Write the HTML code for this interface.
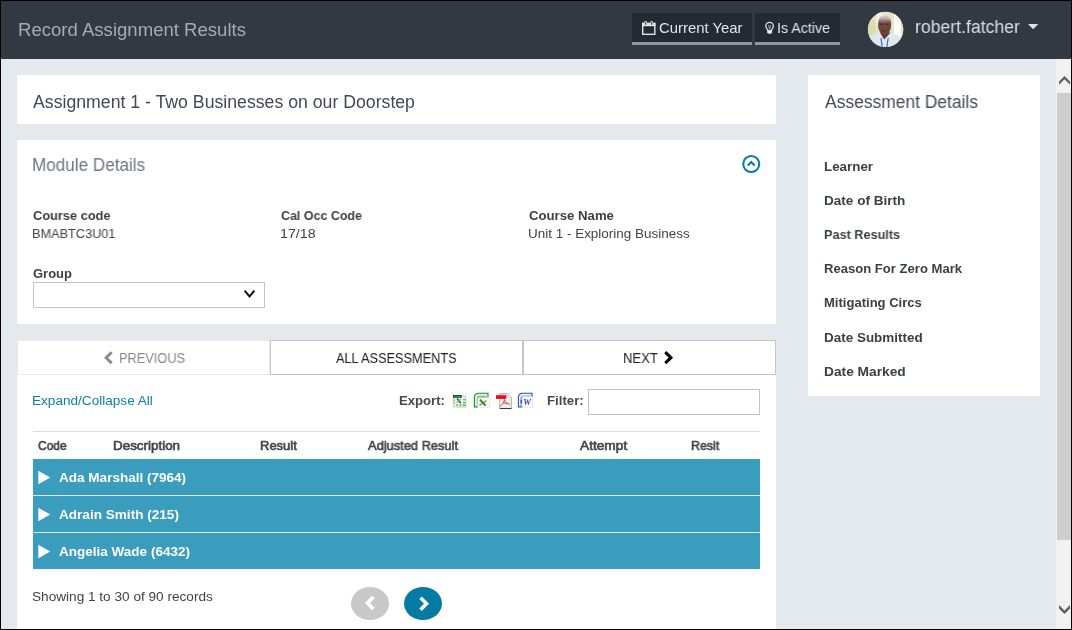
<!DOCTYPE html>
<html><head><meta charset="utf-8"><title>Record Assignment Results</title>
<style>
html,body{margin:0;padding:0;}
body{width:1072px;height:630px;overflow:hidden;background:#000;font-family:"Liberation Sans",sans-serif;position:relative;}
#app{position:absolute;left:1px;top:1px;width:1070px;height:628px;background:#e4e9ed;overflow:hidden;}
/* all children positioned in page coordinates via wrapper offset */
#w{position:absolute;left:-1px;top:-1px;width:1072px;height:630px;}
#w div,#w span,#w svg{position:absolute;}
.t{white-space:pre;transform-origin:0 0;line-height:1;-webkit-font-smoothing:antialiased;will-change:transform;}
.hdr{left:0;top:0;width:1072px;height:59px;background:#323942;}
.card{background:#fff;}
.btn{background:#242a33;border-bottom:3px solid #969696;box-sizing:border-box;}
.row{left:33px;width:727px;height:36px;background:#3b9dbd;}
</style></head><body>
<div id="app"><div id="w">
<div class="hdr"></div>
<!-- header buttons -->
<div class="btn" style="left:632px;top:13px;width:120px;height:32px"></div>
<div class="btn" style="left:755px;top:13px;width:85px;height:32px"></div>
<!-- cards -->
<div class="card" style="left:17px;top:75px;width:759px;height:49px"></div>
<div class="card" style="left:17px;top:140px;width:759px;height:184px"></div>
<div class="card" style="left:17px;top:340px;width:759px;height:290px"></div>
<div class="card" style="left:808px;top:75px;width:232px;height:321px"></div>
<!-- select -->
<div style="left:33px;top:282px;width:232px;height:26px;box-sizing:border-box;border:1px solid #c4c4c4;background:#fff"></div>
<!-- tabs -->
<div style="left:17px;top:340px;width:253px;height:35px;box-sizing:border-box;border:1px solid #ebebeb;background:#fff"></div>
<div style="left:270px;top:340px;width:253px;height:35px;box-sizing:border-box;border:1px solid #c6c6c6;background:#fff"></div>
<div style="left:523px;top:340px;width:253px;height:35px;box-sizing:border-box;border:1px solid #c6c6c6;background:#fff"></div>
<!-- filter input -->
<div style="left:588px;top:389px;width:172px;height:26px;box-sizing:border-box;border:1px solid #c4c4c4;background:#fff"></div>
<!-- table -->
<div style="left:33px;top:431px;width:727px;height:1px;background:#dedede"></div>
<div style="left:33px;top:459px;width:727px;height:110px;background:#e3e6e8"></div>
<div class="row" style="top:459px"></div>
<div class="row" style="top:496px"></div>
<div class="row" style="top:533px"></div>
<!-- pager -->
<div style="left:351px;top:587px;width:38px;height:33px;border-radius:50%;background:#c8c8c8"></div>
<div style="left:404px;top:587px;width:38px;height:33px;border-radius:50%;background:#047ba3"></div>
<!-- scrollbar -->
<div style="left:1056px;top:59px;width:16px;height:571px;background:#f1f1f1"></div>
<div style="left:1057px;top:93px;width:15px;height:447px;background:#cdcdcd"></div>

<!-- ICONS -->
<svg style="left:0;top:0" width="1072" height="630" viewBox="0 0 1072 630">
 <defs>
  <clipPath id="avc"><circle cx="885.6" cy="29.4" r="17.7"/></clipPath>
  <filter id="bl" x="-20%" y="-20%" width="140%" height="140%"><feGaussianBlur stdDeviation="0.7"/></filter>
 <filter id="bl2" x="-5%" y="-5%" width="110%" height="110%"><feGaussianBlur stdDeviation="0.3"/></filter>
 <linearGradient id="hg" x1="0" y1="15.6" x2="0" y2="35" gradientUnits="userSpaceOnUse"><stop offset="0" stop-color="#d6cdcf"/><stop offset="0.13" stop-color="#c4b6b6"/><stop offset="0.27" stop-color="#97756c"/><stop offset="0.4" stop-color="#74493f"/><stop offset="1" stop-color="#6a4238"/></linearGradient>
 </defs>
 <!-- calendar -->
 <g fill="#e3e4e6">
  <rect x="642" y="22.8" width="13.5" height="3.4"/>
  <rect x="644.4" y="21" width="2.6" height="4" rx="1"/>
  <rect x="650.4" y="21" width="2.6" height="4" rx="1"/>
 </g>
 <rect x="642.7" y="23.5" width="12.1" height="10.8" fill="none" stroke="#e3e4e6" stroke-width="1.4"/>
 <rect x="645.2" y="21.8" width="1" height="3" fill="#242a33"/>
 <rect x="651.2" y="21.8" width="1" height="3" fill="#242a33"/>
 <!-- lightbulb -->
 <path d="M767.7 30.3 C767.6 28.9 765.8 27.9 765.8 26.1 A3.8 3.8 0 0 1 773.4 26.1 C773.4 27.9 771.6 28.9 771.5 30.3" fill="none" stroke="#e3e4e6" stroke-width="1.3"/>
 <path d="M767.1 30 h5 v2.2 q-0.5 1.8 -2.5 1.8 q-2 0 -2.5 -1.8 z" fill="#e3e4e6"/>
 <path d="M768.6 25 l1 4.4 l1 -4.4" fill="none" stroke="#c5c7ca" stroke-width="0.7"/>
 <!-- avatar -->
 <g clip-path="url(#avc)">
  <rect x="867" y="11" width="38" height="38" fill="#e2e4c6"/>
  <g filter="url(#bl)">
   <rect x="893.8" y="11" width="7.2" height="29" fill="#fcfcfc"/>
   <rect x="876.5" y="11" width="5.5" height="14" fill="#f3f3ea"/>
   <ellipse cx="871.5" cy="28" rx="4.5" ry="9" fill="#d9ddb0"/>
   <rect x="901" y="24" width="5" height="14" fill="#dfe3bd"/>
   <path d="M865 50 L865 39 Q872 35 879.5 32.3 L891 32.3 Q898 35 906 40 L906 50 Z" fill="#e3e6f1"/>
   <path d="M879.8 32.6 L884.2 39.5 L890.6 32.6 Z" fill="#5a3a35"/>
   <path d="M878 24 Q878 15.6 884.6 15.6 Q891.2 15.6 891.2 24 Q891.2 30 888.4 33 Q886.4 35 884.6 35 Q882.6 35 880.8 33 Q878 30 878 24Z" fill="url(#hg)"/>
   <path d="M880.2 24.2 h3 M885.8 24.2 h3" stroke="#3e2622" stroke-width="1.1"/>
   <ellipse cx="884.6" cy="30.2" rx="2.6" ry="1.3" fill="#4e2c28"/>
   <ellipse cx="884.8" cy="30" rx="1.1" ry="0.5" fill="#a8746c"/>
  </g>
  <path d="M881 38 L882.3 47.8 M888.2 38 L886.7 47.8" stroke="#2b63cb" stroke-width="1.1" fill="none"/>
 </g>
 <!-- caret -->
 <path d="M1028 24 L1038.3 24 L1033.15 29.2 Z" fill="#e0e1e3"/>
 <!-- circle chevron -->
 <circle cx="751.25" cy="164" r="8" fill="none" stroke="#0a7ba5" stroke-width="2.1"/>
 <path d="M747.8 165.4 L751.25 162 L754.7 165.4" fill="none" stroke="#0a7ba5" stroke-width="2.1"/>
 <!-- select chevron -->
 <path d="M244.6 290.7 L249.5 296.4 L254.4 290.7" fill="none" stroke="#111" stroke-width="2"/>
 <!-- tab chevrons -->
 <path d="M111.7 352.3 L106.2 357.8 L111.7 363.3" fill="none" stroke="#8c8c8c" stroke-width="3"/>
 <path d="M665.3 352.2 L670.9 357.7 L665.3 363.2" fill="none" stroke="#000" stroke-width="3.1"/>
 <!-- row triangles -->
 <g fill="#fff">
  <path d="M38.3 470.8 L50.3 477.5 L38.3 484.2Z"/>
  <path d="M38.3 507.8 L50.3 514.5 L38.3 521.2Z"/>
  <path d="M38.3 544.8 L50.3 551.5 L38.3 558.2Z"/>
 </g>
 <!-- pager chevrons -->
 <path d="M373.5 596.9 L367.4 603 L373.5 609.1" fill="none" stroke="#fff" stroke-width="3.6"/>
 <path d="M420.5 597.8 L426.5 603.8 L420.5 609.8" fill="none" stroke="#fff" stroke-width="3.6"/>
 <!-- scrollbar arrows -->
 <path d="M1064.5 76 L1070 81.5 V84.8 L1064.5 79.3 L1059 84.8 V81.5 Z" fill="#5f5f5f"/>
 <path d="M1064.5 614 L1070 608.5 V605.1 L1064.5 610.6 L1059 605.1 V608.5 Z" fill="#5f5f5f"/>
 
 <g filter="url(#bl2)">
 <!-- csv icon -->
 <rect x="453.6" y="396.6" width="12" height="10.2" fill="#fdfffd" stroke="#a9d49a" stroke-width="0.9"/>
 <path d="M466.2 398 v9.4 h-10" fill="none" stroke="#d9d9e2" stroke-width="0.9"/>
 <rect x="453" y="395" width="8.8" height="2.8" fill="#0c4d17"/>
 <path d="M454.3 396.4 h1.2 M456.4 396.4 h1.2 M458.5 396.4 h1.6" stroke="#9fcf9a" stroke-width="0.9"/>
 <rect x="461.8" y="395" width="2.6" height="2.4" fill="#cfe8c4"/>
 <path d="M457 398.6 L460.8 402.9" stroke="#1d5d17" stroke-width="1.5"/>
 <path d="M460.9 399 L456.6 402.6" stroke="#69b356" stroke-width="1.1"/>
 <g fill="#4da046">
  <rect x="463" y="399.2" width="2.3" height="1.1"/><rect x="463" y="401.9" width="2.3" height="1.1"/>
  <rect x="463" y="404.2" width="2.3" height="1.5"/><rect x="459.4" y="404.2" width="2.2" height="1.5"/>
  <rect x="456.2" y="404.2" width="1.6" height="1.5"/>
  <rect x="454.4" y="399" width="0.9" height="5.5" fill="#8cc57f"/>
 </g>
 <!-- excel icon -->
 <path d="M478 406.9 H474.4 V397.6 Q474.4 393.3 478.8 393.3 H488 V397.6" fill="#e9f5e6" stroke="#1d8a2c" stroke-width="1.1"/>
 <path d="M476.6 406 V398 Q476.6 395.6 479 395.6 H486.6 V398 H478.4 V406Z" fill="#8fcb8a"/>
 <path d="M478 397.9 H489.4 V407.8 L477.6 407 Z" fill="#ffffff" stroke="#d4d6da" stroke-width="0.6"/>
 <path d="M486.6 400.6 L479.4 405.2" stroke="#6cbb5c" stroke-width="1.7"/>
 <path d="M479.9 399.6 L485.6 405.6" stroke="#2f7d1c" stroke-width="1.8"/>
 <!-- pdf icon -->
 <path d="M499.6 393.5 H507.8 L511.5 397.2 V408.6 H499.6 Z" fill="#ececec" stroke="#a9a9a9" stroke-width="0.8"/>
 <path d="M507.6 393.6 V397.4 H511.4 Z" fill="#ffffff" stroke="#bdbdbd" stroke-width="0.5"/>
 <path d="M499.8 408.5 H511.4" stroke="#2a2a2a" stroke-width="0.9"/>
 <rect x="496" y="395" width="10.2" height="3.8" fill="#e6000e"/>
 <rect x="496" y="395.2" width="10.2" height="1.2" fill="#ff3b3b"/>
 <path d="M504.4 399 C504.6 402 502 405 500 406.6 M503.4 403.4 C505.6 402.8 508.6 403 510 404.8 M504.3 399.5 C504.5 401.5 506 403 507.5 404" fill="none" stroke="#e03a3a" stroke-width="0.9"/>
 <!-- word icon -->
 <path d="M522.4 406.9 H518.4 V397.6 Q518.4 393.3 522.8 393.3 H532 V397.6" fill="#eef2fb" stroke="#2d52ab" stroke-width="1.1"/>
 <path d="M520.4 406 V398 Q520.4 395.4 523 395.4 H530.8 V397 H522.6 V406Z" fill="#8fa8de"/>
 <rect x="520.6" y="400" width="1.4" height="3.4" fill="#1f3f9c"/>
 <path d="M522.4 396.6 H532.6 V407.6 L522 406.8 Z" fill="#ffffff" stroke="#d0d4dc" stroke-width="0.6"/>
 <text x="523.3" y="405.2" font-family="Liberation Serif, serif" font-style="italic" font-weight="700" font-size="8.6" fill="#2444a4">W</text>
 </g>

</svg>
<span class="t" style="left:18.17px;top:20px;line-height:20px;font-size:18px;font-weight:400;color:#a9abae;transform:scaleX(1.0311);">Record Assignment Results</span>
<span class="t" style="left:658.58px;top:20px;line-height:16px;font-size:14.5px;font-weight:400;color:#e3e4e6;transform:scaleX(1.0250);">Current Year</span>
<span class="t" style="left:776.82px;top:20px;line-height:16px;font-size:14.5px;font-weight:400;color:#e3e4e6;transform:scaleX(0.9811);">Is Active</span>
<span class="t" style="left:915.32px;top:17px;line-height:20px;font-size:18px;font-weight:400;color:#dcdde0;transform:scaleX(0.9802);">robert.fatcher</span>
<span class="t" style="left:33.40px;top:92px;line-height:20px;font-size:17.5px;font-weight:400;color:#434a54;transform:scaleX(1.0103);">Assignment 1 - Two Businesses on our Doorstep</span>
<span class="t" style="left:32.22px;top:155px;line-height:20px;font-size:17.5px;font-weight:400;color:#6f7784;transform:scaleX(0.9772);">Module Details</span>
<span class="t" style="left:33.20px;top:208px;line-height:15px;font-size:13px;font-weight:700;color:#3b4047;transform:scaleX(0.9846);">Course code</span>
<span class="t" style="left:32.22px;top:226px;line-height:15px;font-size:13px;font-weight:400;color:#444444;transform:scaleX(0.9786);">BMABTC3U01</span>
<span class="t" style="left:281.00px;top:208px;line-height:15px;font-size:13px;font-weight:700;color:#3b4047;transform:scaleX(0.9583);">Cal Occ Code</span>
<span class="t" style="left:279.90px;top:226px;line-height:15px;font-size:13px;font-weight:400;color:#444444;transform:scaleX(1.0968);">17/18</span>
<span class="t" style="left:528.60px;top:208px;line-height:15px;font-size:13px;font-weight:700;color:#3b4047;transform:scaleX(1.0133);">Course Name</span>
<span class="t" style="left:527.56px;top:226px;line-height:15px;font-size:13px;font-weight:400;color:#444444;transform:scaleX(1.0361);">Unit 1 - Exploring Business</span>
<span class="t" style="left:33.20px;top:266px;line-height:15px;font-size:13px;font-weight:700;color:#3b4047;transform:scaleX(0.9949);">Group</span>
<span class="t" style="left:118.79px;top:350px;line-height:16px;font-size:14px;font-weight:400;color:#8a8a8a;transform:scaleX(0.9127);">PREVIOUS</span>
<span class="t" style="left:336.30px;top:350px;line-height:16px;font-size:14px;font-weight:400;color:#222222;transform:scaleX(0.9098);">ALL ASSESSMENTS</span>
<span class="t" style="left:623.07px;top:350px;line-height:16px;font-size:14px;font-weight:400;color:#222222;transform:scaleX(0.9333);">NEXT</span>
<span class="t" style="left:32.06px;top:393px;line-height:15px;font-size:13px;font-weight:400;color:#0f7fa3;transform:scaleX(1.0447);">Expand/Collapse All</span>
<span class="t" style="left:398.69px;top:393px;line-height:15px;font-size:13px;font-weight:700;color:#444a52;transform:scaleX(1.0091);">Export:</span>
<span class="t" style="left:546.58px;top:393px;line-height:15px;font-size:13px;font-weight:700;color:#444a52;transform:scaleX(1.0176);">Filter:</span>
<span class="t" style="left:38.40px;top:438px;line-height:15px;font-size:13px;font-weight:400;color:#41464e;transform:scaleX(0.9226);-webkit-text-stroke:0.65px #41464e">Code</span>
<span class="t" style="left:112.67px;top:438px;line-height:15px;font-size:13px;font-weight:400;color:#41464e;transform:scaleX(1.0312);-webkit-text-stroke:0.65px #41464e">Description</span>
<span class="t" style="left:259.50px;top:438px;line-height:15px;font-size:13px;font-weight:400;color:#41464e;transform:scaleX(1.0000);-webkit-text-stroke:0.65px #41464e">Result</span>
<span class="t" style="left:368.00px;top:438px;line-height:15px;font-size:13px;font-weight:400;color:#41464e;transform:scaleX(0.9890);-webkit-text-stroke:0.65px #41464e">Adjusted Result</span>
<span class="t" style="left:580.40px;top:438px;line-height:15px;font-size:13px;font-weight:400;color:#41464e;transform:scaleX(1.0533);-webkit-text-stroke:0.65px #41464e">Attempt</span>
<span class="t" style="left:691.05px;top:438px;line-height:15px;font-size:13px;font-weight:400;color:#41464e;transform:scaleX(0.9517);-webkit-text-stroke:0.65px #41464e">Resit</span>
<span class="t" style="left:59.00px;top:470px;line-height:15px;font-size:13px;font-weight:700;color:#ffffff;transform:scaleX(1.0410);">Ada Marshall (7964)</span>
<span class="t" style="left:59.00px;top:507px;line-height:15px;font-size:13px;font-weight:700;color:#ffffff;transform:scaleX(1.0439);">Adrain Smith (215)</span>
<span class="t" style="left:59.00px;top:544px;line-height:15px;font-size:13px;font-weight:700;color:#ffffff;transform:scaleX(1.0400);">Angelia Wade (6432)</span>
<span class="t" style="left:31.95px;top:589px;line-height:15px;font-size:13px;font-weight:400;color:#444444;transform:scaleX(1.0468);">Showing 1 to 30 of 90 records</span>
<span class="t" style="left:824.70px;top:92px;line-height:20px;font-size:17.5px;font-weight:400;color:#434a54;transform:scaleX(0.9954);">Assessment Details</span>
<span class="t" style="left:823.67px;top:159px;line-height:15px;font-size:13px;font-weight:700;color:#3b4047;transform:scaleX(1.0277);">Learner</span>
<span class="t" style="left:823.66px;top:193px;line-height:15px;font-size:13px;font-weight:700;color:#3b4047;transform:scaleX(1.0434);">Date of Birth</span>
<span class="t" style="left:823.72px;top:227px;line-height:15px;font-size:13px;font-weight:700;color:#3b4047;transform:scaleX(0.9753);">Past Results</span>
<span class="t" style="left:823.69px;top:261px;line-height:15px;font-size:13px;font-weight:700;color:#3b4047;transform:scaleX(1.0059);">Reason For Zero Mark</span>
<span class="t" style="left:823.70px;top:295px;line-height:15px;font-size:13px;font-weight:700;color:#3b4047;transform:scaleX(1.0031);">Mitigating Circs</span>
<span class="t" style="left:823.66px;top:330px;line-height:15px;font-size:13px;font-weight:700;color:#3b4047;transform:scaleX(1.0351);">Date Submitted</span>
<span class="t" style="left:823.64px;top:364px;line-height:15px;font-size:13px;font-weight:700;color:#3b4047;transform:scaleX(1.0566);">Date Marked</span>
</div></div>
</body></html>
